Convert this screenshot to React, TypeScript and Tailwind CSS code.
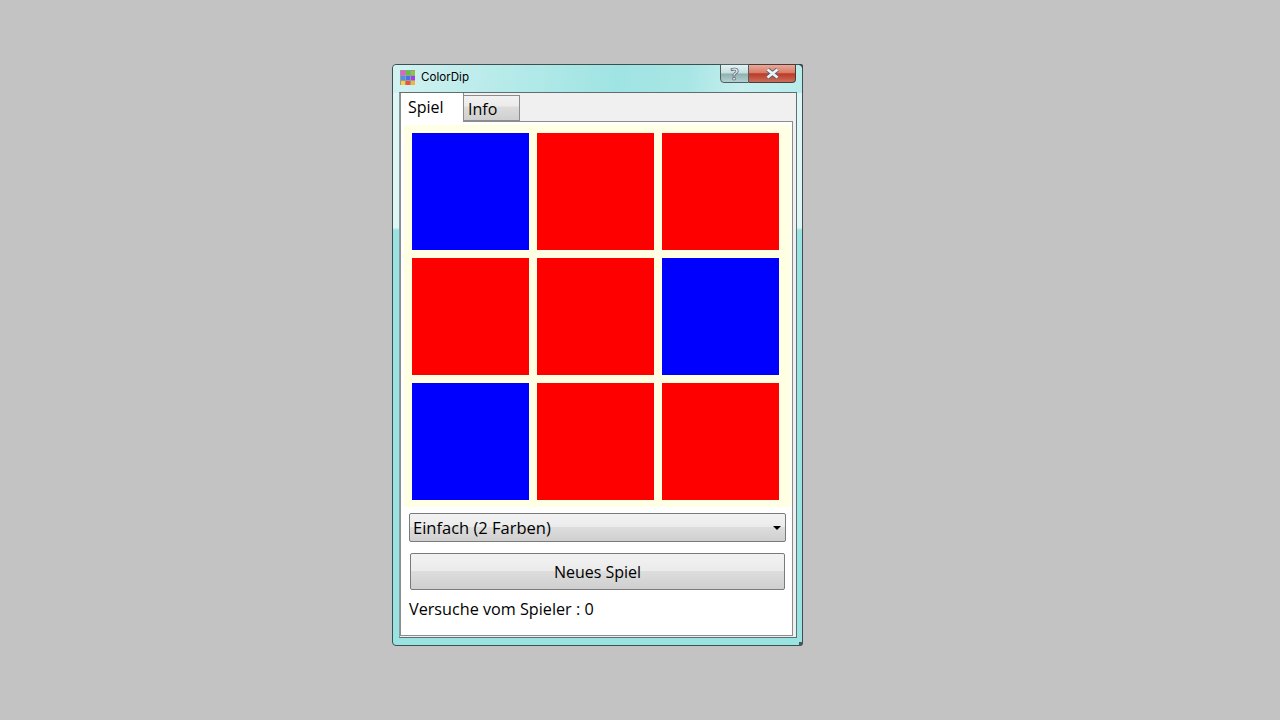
import React from "react";

const B = "bg-[#0000ff]";
const R = "bg-[#ff0000]";
const cells = [B, R, R, R, R, B, B, R, R];
const icon = ["bg-[#ee55d8]", "bg-[#55c83c]", "bg-[#88cc33]", "bg-[#4a90f0]", "bg-[#4a70f0]", "bg-[#a040e8]", "bg-[#f8d040]", "bg-[#f05040]", "bg-[#f8b040]"];
const glossy = "bg-[linear-gradient(to_bottom,#f2f2f2_0%,#ebebeb_48%,#dddddd_50%,#cfcfcf_100%)]";

export default function App() {
  return (
    <div className="h-[720px] w-[1280px] bg-[#c3c3c3] pl-[392px] pt-[64px] font-['Open_Sans','Noto_Sans',sans-serif] text-black">
      <div className="relative h-[582px] w-[411px] rounded-[4px] border border-[#3f4f4f] bg-[linear-gradient(to_bottom,#dff6f6_0%,#dff6f6_28%,#9ae3e3_28.5%,#9ae3e3_100%)] px-[6px] pb-[6px]">
        <div className="absolute -right-px -top-px h-[4px] w-[4px] rounded-tr-[2px] bg-[#3a4444]" />
        <div className="absolute -bottom-px -right-px h-[4px] w-[4px] rounded-br-[3px] bg-[#4a5555]" />
        <div className="absolute inset-x-0 top-0 h-[28px] rounded-t-[4px] bg-[linear-gradient(100deg,#d2f2f2_0%,#b8ebea_25%,#9fe4e3_55%,#a8e6e5_72%,#c6efee_85%,#b7eceb_100%)]" />
        <div className="relative flex h-[27px] items-center gap-[6px] pl-[1px]">
          <div className="-mt-[2px] grid h-[15px] w-[15px] grid-cols-3 gap-[1px] bg-[#9a9a9a] p-[0.5px]">
            {icon.map((c, i) => <div key={i} className={c} />)}
          </div>
          <span className="-mt-[2px] font-['Inter','Noto_Sans',sans-serif] text-[11.6px] leading-none">ColorDip</span>
        </div>
        <div className="absolute right-[6px] top-[-1px] flex h-[19px]">
          <div className="flex w-[29px] items-center justify-center rounded-bl-[4px] border border-[#4a5f5f] bg-[linear-gradient(to_bottom,#e4f3f3_0%,#c6dddd_48%,#8fb0b0_52%,#b5d0d0_100%)] text-[16px] font-bold leading-none text-[#eef2f6] [-webkit-text-stroke:0.6px_#34465a]">?</div>
          <div className="flex w-[47px] items-center justify-center rounded-br-[4px] border border-l-0 border-[#4a3a3a] bg-[linear-gradient(to_bottom,#eaa898_0%,#d87c68_45%,#bd3a28_52%,#c8705c_100%)]">
            <svg width="15" height="11" viewBox="0 0 15 11"><path d="M2.5 1.5 L12.5 9.5 M12.5 1.5 L2.5 9.5" stroke="#55606e" strokeWidth="4.4" /><path d="M2.5 1.5 L12.5 9.5 M12.5 1.5 L2.5 9.5" stroke="#eef2f6" strokeWidth="2.8" /></svg>
          </div>
        </div>
        <div className="relative flex h-[546px] w-[398px] flex-col border border-[#5f6f6f] border-l-[#8a9a9a] bg-[#f0f0f0]">
          <div className="relative z-10 flex h-[28px] items-start">
            <div className="h-[29px] w-[64px] border-x border-[#8c8c8c] bg-white pl-[7px] pt-[3px] text-[16px] leading-[22px]">Spiel</div>
            <div className="mt-[2px] h-[26px] w-[56px] border border-l-0 border-[#8c8c8c] bg-[linear-gradient(to_bottom,#f2f2f2_0%,#ebebeb_42%,#dcdcdc_46%,#cfcfcf_100%)] pl-[4px] pt-[1px] text-[16px] leading-[24px]">Info</div>
          </div>
          <div className="h-[515px] w-[393px] border border-[#8c8c8c] bg-white">
            <div className="ml-[3px] mt-[3px] w-[387px] bg-[#ffffe3] pb-[7px] pl-[8px] pr-[12px] pt-[8px]">
              <div className="grid grid-cols-[117px_117px_117px] grid-rows-[117px_117px_117px] gap-[8px]">
                {cells.map((c, i) => <div key={i} className={c} />)}
              </div>
            </div>
            <div className="relative ml-[8px] mt-[6px] flex h-[29px] w-[377px] items-center rounded-[2px] border border-[#7a7a7a] pl-[3px] pt-[1px] text-[16.5px] bg-[linear-gradient(to_bottom,#f2f2f2_0%,#ebebeb_48%,#dddddd_50%,#cfcfcf_100%)]">
              Einfach (2 Farben)
              <div className="absolute right-[4px] top-[12px] h-0 w-0 border-x-[4px] border-t-[4px] border-x-transparent border-t-black" />
            </div>
            <div className={`ml-[9px] mt-[11px] flex h-[37px] w-[375px] items-center justify-center rounded-[2px] border border-[#7a7a7a] text-[16px] ${glossy}`}>Neues Spiel</div>
            <div className="ml-[8px] mt-[8px] text-[16.2px] leading-[22px]">Versuche vom Spieler : 0</div>
          </div>
        </div>
      </div>
    </div>
  );
}
